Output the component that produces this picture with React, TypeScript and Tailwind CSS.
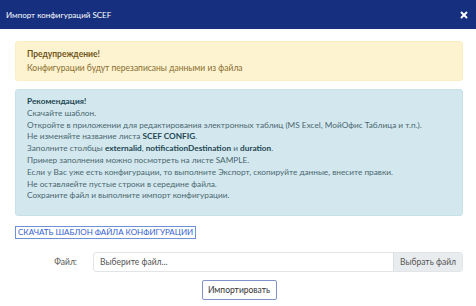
import { X } from 'lucide-react'

const lines = [
  <>Скачайте шаблон.</>,
  <>Откройте в приложении для редактирования электронных таблиц (MS Excel, МойОфис Таблица и т.п.).</>,
  <>Не изменяйте название листа <b>SCEF CONFIG</b>.</>,
  <>Заполните столбцы <b>externalid</b>, <b>notificationDestination</b> и <b>duration</b>.</>,
  <>Пример заполнения можно посмотреть на листе SAMPLE.</>,
  <>Если у Вас уже есть конфигурации, то выполните Экспорт, скопируйте данные, внесите правки.</>,
  <>Не оставляейте пустые строки в середине файла.</>,
  <>Сохраните файл и выполните импорт конфигурации.</>,
]

export default function App() {
  return (
    <div className="w-[476px] h-[306px] bg-white font-['Lato',sans-serif] overflow-hidden">
      <div className="h-[29px] bg-[#16307f] flex items-center justify-between pl-[6px] pr-[7px]">
        <span className="text-white text-[8px]">Импорт конфигураций SCEF</span>
        <X className="w-[10px] h-[10px] text-white" strokeWidth={4.5} />
      </div>

      <div className="pl-[15px] pr-[13px]">
        <div className="mt-[12px] h-[40px] rounded-[3px] bg-[#fdf3d0] border border-[#fbeec3] px-[11px] pt-[5px] text-[8.5px] leading-[14px] text-[#8a6d2e]">
          <div className="font-bold text-[#6f5518]">Предупреждение!</div>
          <div>Конфигурации будут перезаписаны данными из файла</div>
        </div>

        <div className="mt-[8px] h-[127px] rounded-[3px] bg-[#d3e8ee] border border-[#c7e1e8] px-[11px] pt-[6px] text-[8.25px] leading-[11.8px] text-[#4a6770]">
          <div className="font-bold text-[#234753]">Рекомендация!</div>
          {lines.map((l, i) => (
            <div key={i} className="whitespace-nowrap [&_b]:text-[#234753]">{l}</div>
          ))}
        </div>

        <div className="mt-[10px] flex">
          <span className="border border-[#6f8fd6] px-[2px] h-[13px] leading-[11px] text-[8px] text-[#3461d2]">
            СКАЧАТЬ ШАБЛОН ФАЙЛА КОНФИГУРАЦИИ
          </span>
        </div>

        <div className="mt-[13px] flex items-center">
          <span className="w-[62px] text-right text-[8.5px] text-[#555]">Файл:</span>
          <div className="ml-[16px] flex-1 h-[20px] flex border border-[#e2e4e6] rounded-[3px] overflow-hidden">
            <div className="flex-1 flex items-center pl-[6px] text-[8.5px] text-[#555]">Выберите файл...</div>
            <div className="w-[69px] bg-[#e9ecef] border-l border-[#dde0e3] flex items-center justify-center text-[8.5px] text-[#555]">
              Выбрать файл
            </div>
          </div>
        </div>

        <div className="mt-[8px] flex justify-center">
          <button className="h-[20px] w-[75px] border border-[#8093c8] rounded-[2px] text-[8.5px] text-[#333] bg-white">
            Импортировать
          </button>
        </div>
      </div>
    </div>
  )
}
